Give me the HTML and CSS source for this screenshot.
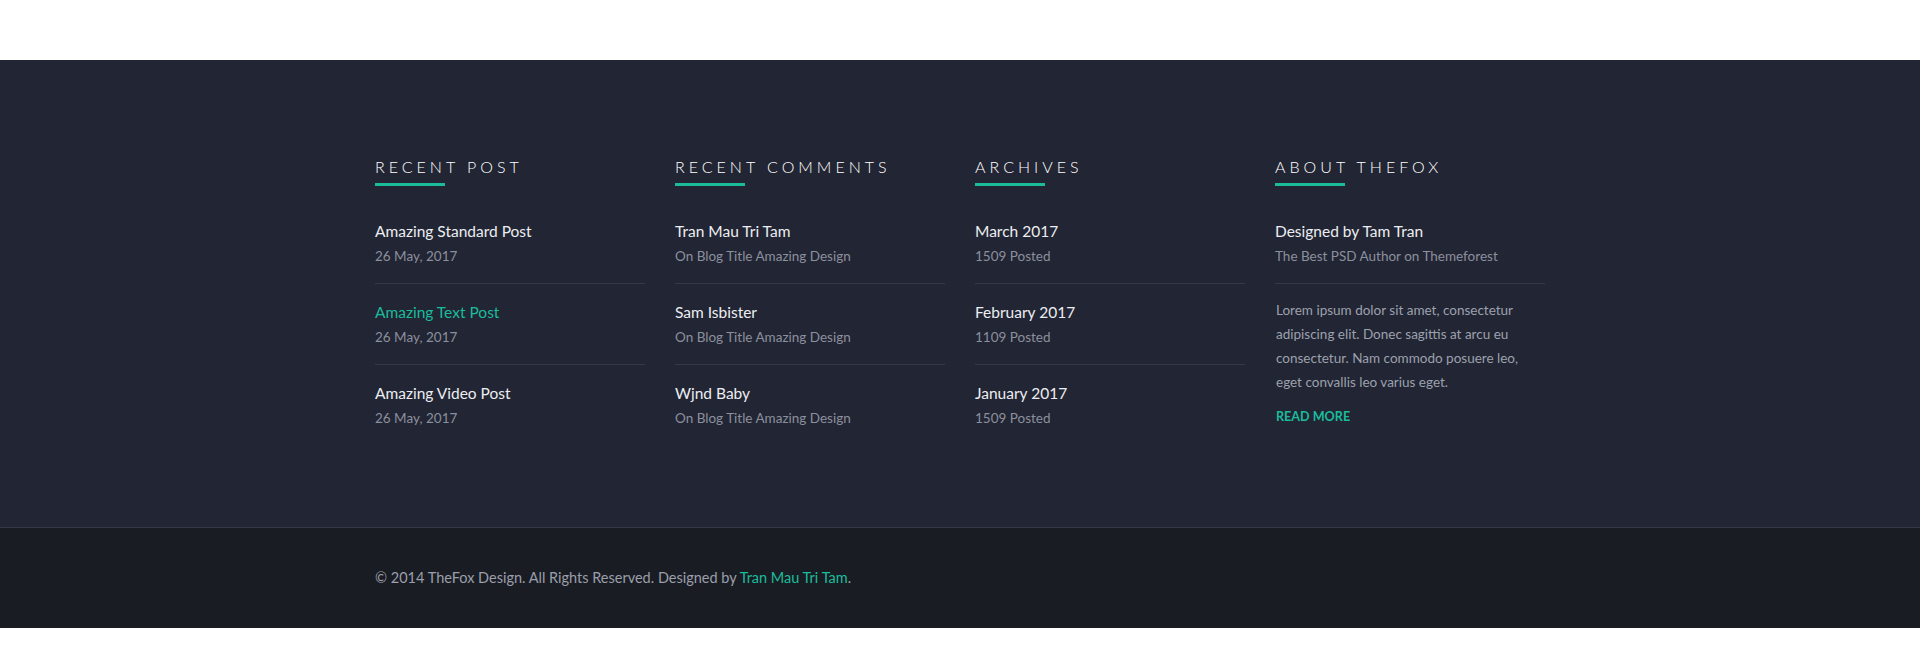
FILE: index.html
```html
<!DOCTYPE html>
<html lang="en">
<head>
<meta charset="utf-8">
<title>TheFox Footer</title>
<link rel="stylesheet" href="styles.css">
</head>
<body>
<div class="top-space"></div>
<footer class="footer">
  <div class="footer-main">
    <div class="container">
      <section class="col">
        <h3 class="widget-title">Recent Post</h3>
        <ul class="list">
          <li class="item"><a class="item-title" href="#">Amazing Standard Post</a><span class="item-meta">26 May, 2017</span></li>
          <li class="item"><a class="item-title active" href="#">Amazing Text Post</a><span class="item-meta">26 May, 2017</span></li>
          <li class="item"><a class="item-title" href="#">Amazing Video Post</a><span class="item-meta">26 May, 2017</span></li>
        </ul>
      </section>
      <section class="col">
        <h3 class="widget-title">Recent Comments</h3>
        <ul class="list">
          <li class="item"><a class="item-title" href="#">Tran Mau Tri Tam</a><span class="item-meta">On Blog Title Amazing Design</span></li>
          <li class="item"><a class="item-title" href="#">Sam Isbister</a><span class="item-meta">On Blog Title Amazing Design</span></li>
          <li class="item"><a class="item-title" href="#">Wjnd Baby</a><span class="item-meta">On Blog Title Amazing Design</span></li>
        </ul>
      </section>
      <section class="col">
        <h3 class="widget-title">Archives</h3>
        <ul class="list">
          <li class="item"><a class="item-title" href="#">March 2017</a><span class="item-meta">1509 Posted</span></li>
          <li class="item"><a class="item-title" href="#">February 2017</a><span class="item-meta">1109 Posted</span></li>
          <li class="item"><a class="item-title" href="#">January 2017</a><span class="item-meta">1509 Posted</span></li>
        </ul>
      </section>
      <section class="col">
        <h3 class="widget-title">About TheFox</h3>
        <ul class="list">
          <li class="item item-bordered"><span class="item-title">Designed by Tam Tran</span><span class="item-meta">The Best PSD Author on Themeforest</span></li>
        </ul>
        <p class="about-text">Lorem ipsum dolor sit amet, consectetur adipiscing elit. Donec sagittis at arcu eu consectetur. Nam commodo posuere leo, eget convallis leo varius eget.</p>
        <a class="read-more" href="#">Read More</a>
      </section>
    </div>
  </div>
  <div class="footer-bottom">
    <div class="container">
      <p class="copyright">© 2014 TheFox Design. All Rights Reserved. Designed by <a href="#">Tran Mau Tri Tam</a>.</p>
    </div>
  </div>
</footer>
</body>
</html>
```

FILE: styles.css
```css
* { box-sizing: border-box; }

html, body {
  margin: 0;
  padding: 0;
  background: #ffffff;
  font-family: Lato, "Noto Sans", sans-serif;
}

.top-space { height: 60px; }

.footer-main {
  background: #222533;
  padding: 97px 0 0;
  height: 468px;
  border-bottom: 1px solid #343847;
}

.container {
  width: 1200px;
  margin: 0 auto;
  display: grid;
  grid-template-columns: repeat(4, 300px);
}

.footer-bottom .container { display: block; padding: 0 15px; }

.col { padding: 0 15px; }

.widget-title {
  margin: 0 0 17px;
  font-size: 16px;
  line-height: 20px;
  font-weight: 300;
  letter-spacing: 4px;
  text-transform: uppercase;
  color: #ffffff;
}

.widget-title::after {
  content: "";
  display: block;
  width: 70px;
  height: 3px;
  margin-top: 6px;
  background: #1abc9c;
}

.list {
  list-style: none;
  margin: 0;
  padding: 0;
}

.item {
  display: flex;
  flex-direction: column;
  padding: 16px 0 17px;
  border-bottom: 1px solid #353949;
}

.item:last-child { border-bottom: none; }
.item.item-bordered { border-bottom: 1px solid #353949; }

.item-title {
  font-size: 15.5px;
  line-height: 24px;
  color: #eceef2;
  text-decoration: none;
}

.item-title.active { color: #1abc9c; }

.item-meta {
  margin-top: 3px;
  font-size: 13.5px;
  line-height: 20px;
  color: #8b909e;
}

.about-text {
  margin: 0;
  padding: 14px 0 0 1px;
  font-size: 13.5px;
  line-height: 24px;
  color: #9ca1ae;
}

.read-more {
  display: block;
  margin-top: 13px;
  padding-left: 1px;
  font-size: 12.6px;
  line-height: 20px;
  font-weight: 700;
  text-transform: uppercase;
  color: #1abc9c;
  text-decoration: none;
}

.footer-bottom {
  background: #1a1c23;
  height: 100px;
  padding: 40px 0;
}

.copyright {
  margin: 0;
  font-size: 14.5px;
  line-height: 20px;
  color: #9a9fab;
}

.copyright a {
  color: #1abc9c;
  text-decoration: none;
}
```
